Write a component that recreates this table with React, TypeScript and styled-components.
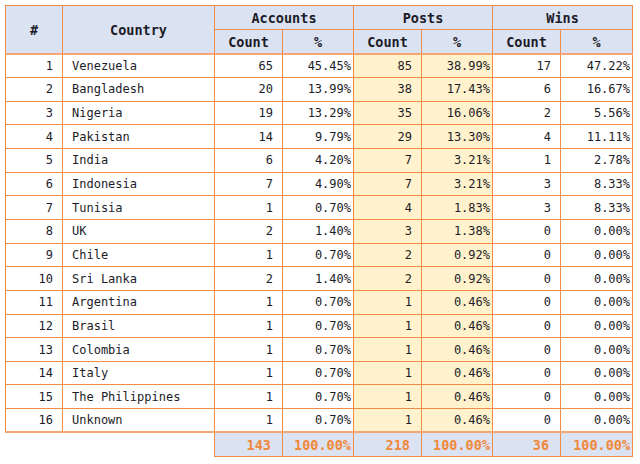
import React from "react";
import styled, { createGlobalStyle } from "styled-components";

const Global = createGlobalStyle`
  html, body { margin: 0; padding: 0; background: #ffffff; }
  body { font-family: "DejaVu Sans Mono", "Liberation Mono", monospace; }
`;

const Page = styled.div`
  padding: 5px 0 0 5px;
`;

const Table = styled.table`
  border-collapse: collapse;
  table-layout: fixed;
  width: 627px;
  color: #1c1c28;
  font-family: "DejaVu Sans Mono", "Liberation Mono", monospace;
`;

const Th = styled.th<{ $bottom?: boolean }>`
  background: #dbe2f2;
  border: 1px solid #ef8c48;
  ${(p) => (p.$bottom ? "border-bottom: 2px solid #f4a774;" : "")}
  font-size: 13.5px;
  font-weight: bold;
  text-align: center;
  vertical-align: middle;
  padding: 0;
  height: 23px;
`;

const Tr = styled.tr`
  height: 23.65px;
`;

type Kind = "num" | "pct" | "text";

const Td = styled.td<{ $kind?: Kind; $posts?: boolean }>`
  border: 1px solid #ef8c48;
  background: ${(p) => (p.$posts ? "#fff2cc" : "#ffffff")};
  font-size: 12px;
  text-align: ${(p) => (p.$kind === "text" ? "left" : "right")};
  padding: ${(p) =>
    p.$kind === "text" ? "0 0 0 9px" : p.$kind === "pct" ? "0 2px 0 0" : "0 9px 0 0"};
  vertical-align: middle;
  white-space: nowrap;
  overflow: hidden;
`;

const FootRow = styled.tr`
  height: 24px;
`;

const Blank = styled.td`
  border: none;
  border-top: 2px solid #f4a774;
  background: transparent;
`;

const FootCell = styled.td<{ $pct?: boolean }>`
  border: 1px solid #ef8c48;
  border-top: 2px solid #f4a774;
  background: #dbe2f2;
  color: #f0893b;
  font-size: 13.5px;
  font-weight: bold;
  text-align: right;
  padding: ${(p) => (p.$pct ? "0 2px 0 0" : "0 11px 0 0")};
  vertical-align: middle;
  white-space: nowrap;
`;

type Row = [string, number, string, number, string, number, string];

const rows: Row[] = [
  ["Venezuela", 65, "45.45%", 85, "38.99%", 17, "47.22%"],
  ["Bangladesh", 20, "13.99%", 38, "17.43%", 6, "16.67%"],
  ["Nigeria", 19, "13.29%", 35, "16.06%", 2, "5.56%"],
  ["Pakistan", 14, "9.79%", 29, "13.30%", 4, "11.11%"],
  ["India", 6, "4.20%", 7, "3.21%", 1, "2.78%"],
  ["Indonesia", 7, "4.90%", 7, "3.21%", 3, "8.33%"],
  ["Tunisia", 1, "0.70%", 4, "1.83%", 3, "8.33%"],
  ["UK", 2, "1.40%", 3, "1.38%", 0, "0.00%"],
  ["Chile", 1, "0.70%", 2, "0.92%", 0, "0.00%"],
  ["Sri Lanka", 2, "1.40%", 2, "0.92%", 0, "0.00%"],
  ["Argentina", 1, "0.70%", 1, "0.46%", 0, "0.00%"],
  ["Brasil", 1, "0.70%", 1, "0.46%", 0, "0.00%"],
  ["Colombia", 1, "0.70%", 1, "0.46%", 0, "0.00%"],
  ["Italy", 1, "0.70%", 1, "0.46%", 0, "0.00%"],
  ["The Philippines", 1, "0.70%", 1, "0.46%", 0, "0.00%"],
  ["Unknown", 1, "0.70%", 1, "0.46%", 0, "0.00%"],
];

export default function App() {
  return (
    <Page>
      <Global />
      <Table>
        <colgroup>
          <col style={{ width: 57 }} />
          <col style={{ width: 152 }} />
          <col style={{ width: 68 }} />
          <col style={{ width: 71 }} />
          <col style={{ width: 68 }} />
          <col style={{ width: 71 }} />
          <col style={{ width: 68 }} />
          <col style={{ width: 72 }} />
        </colgroup>
        <thead>
          <tr>
            <Th rowSpan={2} $bottom>#</Th>
            <Th rowSpan={2} $bottom>Country</Th>
            <Th colSpan={2}>Accounts</Th>
            <Th colSpan={2}>Posts</Th>
            <Th colSpan={2}>Wins</Th>
          </tr>
          <tr>
            <Th $bottom>Count</Th>
            <Th $bottom>%</Th>
            <Th $bottom>Count</Th>
            <Th $bottom>%</Th>
            <Th $bottom>Count</Th>
            <Th $bottom>%</Th>
          </tr>
        </thead>
        <tbody>
          {rows.map((r, i) => (
            <Tr key={r[0]}>
              <Td $kind="num">{i + 1}</Td>
              <Td $kind="text">{r[0]}</Td>
              <Td $kind="num">{r[1]}</Td>
              <Td $kind="pct">{r[2]}</Td>
              <Td $kind="num" $posts>{r[3]}</Td>
              <Td $kind="pct" $posts>{r[4]}</Td>
              <Td $kind="num">{r[5]}</Td>
              <Td $kind="pct">{r[6]}</Td>
            </Tr>
          ))}
        </tbody>
        <tfoot>
          <FootRow>
            <Blank />
            <Blank />
            <FootCell>143</FootCell>
            <FootCell $pct>100.00%</FootCell>
            <FootCell>218</FootCell>
            <FootCell $pct>100.00%</FootCell>
            <FootCell>36</FootCell>
            <FootCell $pct>100.00%</FootCell>
          </FootRow>
        </tfoot>
      </Table>
    </Page>
  );
}
